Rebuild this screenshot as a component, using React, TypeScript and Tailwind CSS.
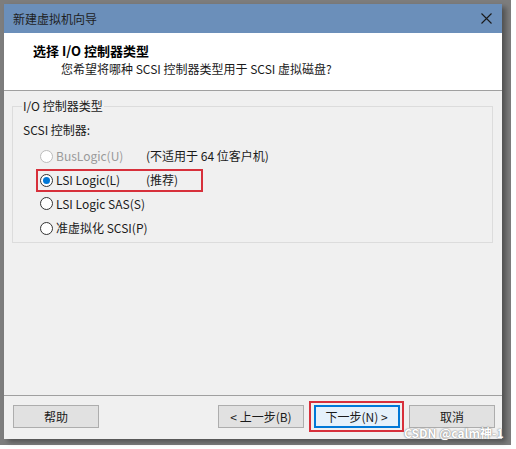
import React from 'react';

const font = {
  fontFamily: '"Noto Sans CJK SC", "Liberation Sans", sans-serif',
};

const Radio = ({ checked, disabled }: { checked?: boolean; disabled?: boolean }) => (
  <span
    className={`flex h-[13px] w-[13px] items-center justify-center rounded-full border bg-white ${
      disabled ? 'border-[#bcbcbc] bg-[#f0f0f0]' : 'border-[#333333]'
    }`}
  >
    {checked && <span className="h-[7px] w-[7px] rounded-full bg-[#0078d7]" />}
  </span>
);

const Button = ({
  children,
  className = '',
}: {
  children: React.ReactNode;
  className?: string;
}) => (
  <button
    className={`flex h-[23px] items-center justify-center border border-[#adadad] bg-[#e1e1e1] text-[12px] text-[#1a1a1a] ${className}`}
  >
    {children}
  </button>
);

const App = () => {
  return (
    <div className="relative h-[449px] w-[516px] bg-white" style={font}>
      <div className="h-[445px] w-[511px] bg-[#7d7d7d] pl-[4px] pt-[4px]">
        <div className="flex h-[435px] w-[498px] flex-col bg-[#f0f0f0] shadow-[4px_3px_5px_rgba(0,0,0,0.35)]">
          {/* title bar */}
          <div className="flex h-[29px] items-center justify-between bg-[#6b8fba] pl-[9px] pr-[9px]">
            <span className="text-[12px] text-[#1e1e1e]">新建虚拟机向导</span>
            <svg width="11" height="11" viewBox="0 0 11 11" className="mr-[1px]">
              <path d="M0.5 0.5 L10.5 10.5 M10.5 0.5 L0.5 10.5" stroke="#1a1a1a" strokeWidth="1.1" />
            </svg>
          </div>

          {/* header */}
          <div className="flex h-[58px] flex-col border-b border-[#a0a0a0] bg-white pl-[29px] pt-[9px]">
            <div className="text-[13px] font-bold leading-[18px] text-black">选择 I/O 控制器类型</div>
            <div className="pl-[28px] text-[12px] leading-[18px] text-[#1a1a1a]">
              您希望将哪种 SCSI 控制器类型用于 SCSI 虚拟磁盘?
            </div>
          </div>

          {/* body */}
          <div className="flex-1 px-[8px] pt-[8px]">
            <fieldset className="h-[144px] w-[481px] border border-[#dcdcdc] px-[8px] pb-0 pt-0">
              <legend className="ml-[1px] px-[1px] text-[12px] leading-[14px] text-[#1a1a1a]">
                I/O 控制器类型
              </legend>
              <div className="pl-[2px] pt-[9px] text-[12px] leading-[16px] text-[#1a1a1a]">SCSI 控制器:</div>
              <div className="mt-[6px] flex flex-col">
                <div className="flex h-[24.5px] items-center pl-[19px] text-[12px] text-[#9a9a9a]">
                  <Radio disabled />
                  <span className="ml-[3px] w-[90px]">BusLogic(U)</span>
                  <span className="text-[#1a1a1a]">(不适用于 64 位客户机)</span>
                </div>
                <div className="ml-[15px] flex h-[23px] w-[167px] items-center border-2 border-[#d7303b] pl-[2px] text-[12px] text-[#1a1a1a]">
                  <Radio checked />
                  <span className="ml-[3px] w-[90px]">LSI Logic(L)</span>
                  <span>(推荐)</span>
                </div>
                <div className="flex h-[24.5px] items-center pl-[19px] text-[12px] text-[#1a1a1a]">
                  <Radio />
                  <span className="ml-[3px]">LSI Logic SAS(S)</span>
                </div>
                <div className="flex h-[24.5px] items-center pl-[19px] text-[12px] text-[#1a1a1a]">
                  <Radio />
                  <span className="ml-[3px]">准虚拟化 SCSI(P)</span>
                </div>
              </div>
            </fieldset>
          </div>

          {/* footer */}
          <div className="flex h-[44px] items-start border-t border-[#a0a0a0] pl-[9px] pt-[9px]">
            <Button className="w-[86px]">帮助</Button>
            <Button className="ml-[119px] w-[86px]">&lt; 上一步(B)</Button>
            <div className="ml-[5px] mt-[-4px] flex h-[31px] w-[95px] items-center justify-center border-2 border-[#d7303b]">
              <button className="flex h-[23px] w-[86px] items-center justify-center border-2 border-[#0078d7] bg-[#e5f1fb] text-[12px] text-[#1a1a1a]">
                下一步(N) &gt;
              </button>
            </div>
            <Button className="ml-[5px] w-[86px]">取消</Button>
          </div>
        </div>
      </div>
      <div
        className="absolute left-[404px] top-[427px] text-[12px] font-bold leading-[12px] text-white"
        style={{ textShadow: '0 0 2px #8a8a8a, 0 0 1px #8a8a8a' }}
      >
        CSDN @calm神-1
      </div>
    </div>
  );
};

export default App;
